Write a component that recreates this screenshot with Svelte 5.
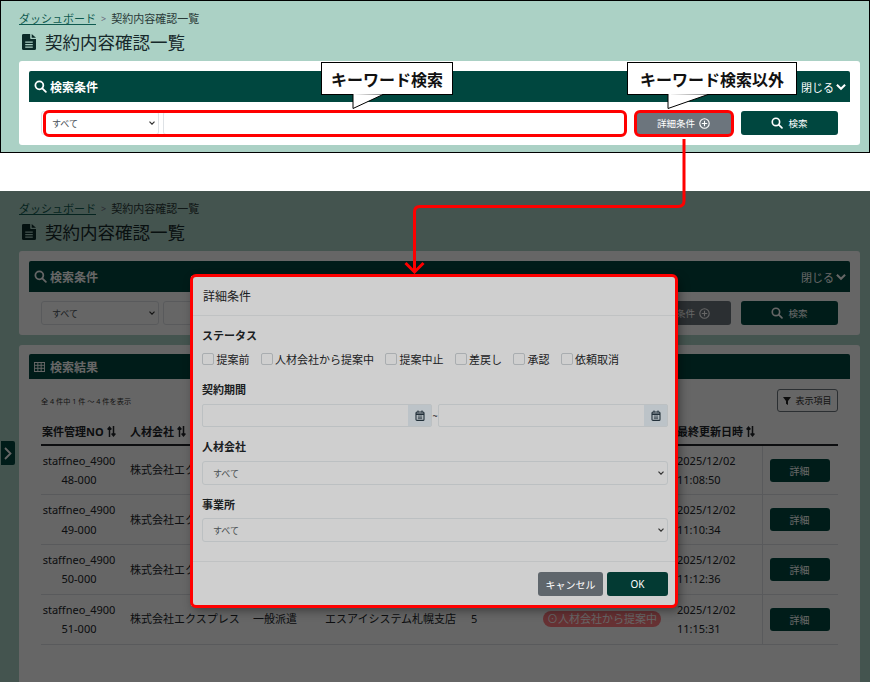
<script>
  const rows = [
    { no: '48-000', date: '11:08:50' },
    { no: '49-000', date: '11:10:34' },
    { no: '50-000', date: '11:12:36' },
    { no: '51-000', date: '11:15:31' }
  ];
  const statuses = ['提案前', '人材会社から提案中', '提案中止', '差戻し', '承認', '依頼取消'];
</script>

{#snippet searchIcon(size)}
  <svg width={size} height={size} viewBox="0 0 16 16" fill="none" stroke="currentColor" stroke-width="2.2">
    <circle cx="6.6" cy="6.6" r="4.9" />
    <path d="M10.2 10.2 14.6 14.6" stroke-linecap="round" />
  </svg>
{/snippet}

{#snippet sortIcon()}
  <svg class="sort" width="9" height="11" viewBox="0 0 9 11" fill="none" stroke="currentColor" stroke-width="1.5">
    <path d="M2.5 11V1.5M.6 3.4 2.5 1.2 4.4 3.4M6.5 0v9.5M4.6 7.6 6.5 9.8 8.4 7.6" />
  </svg>
{/snippet}

{#snippet calendar()}
  <svg width="10" height="11" viewBox="0 0 10 11" fill="none" stroke="#22303a" stroke-width="1.1">
    <rect x="1" y="2" width="8" height="8.4" rx="1" />
    <path d="M1 4.2h8" stroke-width="1.6" />
    <path d="M3 .4v2M7 .4v2" />
    <path d="M2.8 6h4.4M2.8 7.3h4.4M2.8 8.6h4.4" stroke-width=".7" />
  </svg>
{/snippet}

{#snippet selectBox(cls)}
  <div class="select-wrap {cls}">
    <select><option>すべて</option></select>
    <svg class="caret" width="6" height="4" viewBox="0 0 6 4" fill="none" stroke="#333" stroke-width="1.2"><path d="M.5 .7 3 3.2 5.500 .7" /></svg>
  </div>
{/snippet}

{#snippet pageTop()}
  <nav class="crumbs"><span class="crumb-link">ダッシュボード</span><span class="sep">&gt;</span><span>契約内容確認一覧</span></nav>
  <h1 class="title">
    <svg width="14" height="16" viewBox="0 0 13 17" preserveAspectRatio="none" fill="#0c2b29">
      <path d="M1.4 0H7.6V4.6Q7.6 5.4 8.4 5.4H13V15.6Q13 17 11.6 17H1.4Q0 17 0 15.6V1.4Q0 0 1.4 0ZM9 0 13 4H9ZM3 8V9.3H10V8ZM3 10.6V11.9H10V10.6ZM3 13.2V14.5H10V13.2Z" fill-rule="evenodd" />
    </svg>
    <span class="title-text">契約内容確認一覧</span>
  </h1>
  <section class="card search-card">
    <div class="bar search-bar">
      <span class="bar-title">{@render searchIcon(13)} 検索条件</span>
      <span class="bar-close">閉じる
        <svg width="10" height="8" viewBox="0 0 11 8" fill="none" stroke="currentColor" stroke-width="2.2"><path d="M1 1.5 5.5 6 10 1.5" /></svg>
      </span>
    </div>
    <div class="search-row">
      {@render selectBox('kind')}
      <input class="keyword" type="text" />
      <button class="btn grey detail-btn">詳細条件
        <svg width="11" height="11" viewBox="0 0 11 11" fill="none" stroke="currentColor" stroke-width="1.1"><circle cx="5.5" cy="5.5" r="4.7" /><path d="M5.5 2.8v5.4M2.8 5.5h5.4" /></svg>
      </button>
      <button class="btn dark search-btn">{@render searchIcon(12)} 検索</button>
    </div>
  </section>
{/snippet}

<div class="figure">
  <div class="panel top-panel">
    {@render pageTop()}
  </div>

  <div class="panel dim-panel">
    {@render pageTop()}

    <section class="card result-card">
      <div class="bar result-bar">
        <svg width="11" height="10" viewBox="0 0 12 10" preserveAspectRatio="none" fill="none" stroke="currentColor" stroke-width="1"><rect x=".5" y=".5" width="11" height="9" /><path d="M.5 3.3h11M.5 6.3h11M4.2 .5v9M7.8 .5v9" /></svg>
        <span>検索結果</span>
      </div>
      <div class="result-inner">
        <div class="toolbar">
          <span class="count">全 4 件中 1 件 ～ 4 件を表示</span>
          <button class="columns-btn">
            <svg width="8" height="8" viewBox="0 0 8 8" fill="#222"><path d="M0 0H8L5 4V8L3 6.8V4Z" /></svg>
            表示項目
          </button>
        </div>
        <table>
          <colgroup>
            <col style="width:76px" /><col style="width:136px" /><col style="width:72px" /><col style="width:146px" />
            <col style="width:72px" /><col style="width:134px" /><col style="width:85px" /><col style="width:76px" />
          </colgroup>
          <thead>
            <tr>
              <th class="first">案件管理NO {@render sortIcon()}</th>
              <th class="second">人材会社 {@render sortIcon()}</th>
              <th>契約種別</th>
              <th>事業所</th>
              <th>人数</th>
              <th>ステータス</th>
              <th colspan="2">最終更新日時 {@render sortIcon()}</th>
            </tr>
          </thead>
          <tbody>
            {#each rows as row}
              <tr>
                <td class="no">staffneo_4900<br />{row.no}</td>
                <td class="second">株式会社エクスプレス</td>
                <td>一般派遣</td>
                <td>エスアイシステム札幌支店</td>
                <td>5</td>
                <td><span class="badge">⊙人材会社から提案中</span></td>
                <td>2025/12/02<br />{row.date}</td>
                <td class="action"><button class="btn dark row-btn">詳細</button></td>
              </tr>
            {/each}
          </tbody>
        </table>
      </div>
    </section>

    <button class="side-toggle" aria-label="開く">
      <svg width="8" height="13" viewBox="0 0 8 13" fill="none" stroke="#fff" stroke-width="1.8"><path d="M1 1 6.500 6.500 1 12" /></svg>
    </button>

    <div class="backdrop"></div>

    <div class="modal">
      <header class="modal-head">詳細条件</header>
      <div class="modal-body">
        <div class="label">ステータス</div>
        <div class="checks">
          {#each statuses as s}
            <label class="check"><input type="checkbox" /><span>{s}</span></label>
          {/each}
        </div>
        <div class="label period">契約期間</div>
        <div class="dates">
          <div class="date-input"><input type="text" /><span class="addon">{@render calendar()}</span></div>
          <span class="tilde">~</span>
          <div class="date-input"><input type="text" /><span class="addon">{@render calendar()}</span></div>
        </div>
        <div class="label next">人材会社</div>
        {@render selectBox('wide')}
        <div class="label next">事業所</div>
        {@render selectBox('wide last')}
      </div>
      <footer class="modal-foot">
        <button class="btn cancel">キャンセル</button>
        <button class="btn ok">OK</button>
      </footer>
    </div>
  </div>

  <!-- annotations drawn over the two screenshots -->
  <div class="mark mark-keyword"></div>
  <div class="mark mark-detail"></div>
  <div class="mark mark-modal"></div>

  <div class="callout call-keyword">キーワード検索</div>
  <div class="callout call-other">キーワード検索以外</div>

  <svg class="connector" width="870" height="682" viewBox="0 0 870 682" fill="none">
    <path d="M684 139V201Q684 206.500 678 206.500H420Q414.500 206.500 414.500 212V271" stroke="#f00" stroke-width="3" />
    <path d="M405.500 263 414.500 272 423.500 263" stroke="#f00" stroke-width="3" />
    <path d="M353 94V108.500L383 94.500" fill="#fff" stroke="#000" />
    <path d="M668 94V108.500L708 94.500" fill="#fff" stroke="#000" />
  </svg>
</div>

<style>
  :global(body) {
    margin: 0;
    background: #fff;
  }

  * {
    box-sizing: border-box;
  }

  .figure {
    position: relative;
    width: 870px;
    height: 682px;
    overflow: hidden;
    background: #fff;
    font-family: "Noto Sans", "Noto Sans CJK JP", sans-serif;
    font-size: 11px;
    color: #212529;
  }

  button,
  input,
  select {
    font-family: inherit;
  }

  .panel {
    background: #abd1c5;
    padding: 7px 0 0 18px;
  }

  .top-panel {
    height: 153px;
    border: 1px solid #000;
  }

  .dim-panel {
    position: relative;
    height: 491px;
    margin-top: 38px;
    padding-left: 19px;
    overflow: hidden;
  }

  .crumbs {
    display: flex;
    align-items: center;
    gap: 5px;
    height: 20px;
    font-size: 11px;
    color: #2a3a38;
  }

  .crumb-link {
    color: #0f5a50;
    text-decoration: underline;
  }

  .sep {
    color: #667;
    font-size: 9px;
  }

  .title {
    display: flex;
    align-items: center;
    gap: 9px;
    height: 22px;
    margin: 4px 0 7px;
    font-size: 17.5px;
    font-weight: 400;
    color: #16282a;
  }

  .title svg {
    margin: 0 0 2px 3px;
  }

  .title-text {
    margin-bottom: 4px;
  }

  .card {
    width: 841px;
    background: #fff;
    border-radius: 3px;
    padding: 10px;
  }

  .bar {
    display: flex;
    align-items: center;
    background: #00473f;
    color: #fff;
    border-radius: 2px 2px 0 0;
    font-weight: 700;
    font-size: 12px;
  }

  .search-bar {
    justify-content: space-between;
    height: 31px;
    padding: 0 4px 0 5px;
  }

  .bar-title {
    display: flex;
    align-items: center;
    gap: 3px;
  }

  .bar-close {
    display: flex;
    align-items: center;
    gap: 2px;
    font-size: 11px;
    font-weight: 400;
  }

  .search-row {
    display: flex;
    height: 24px;
    margin: 9px 0 0 12px;
  }

  .select-wrap {
    position: relative;
  }

  .select-wrap select {
    appearance: none;
    display: block;
    width: 100%;
    height: 100%;
    border-radius: 3px;
    font-size: 9px;
    padding: 0 0 0 10px;
  }

  .caret {
    position: absolute;
    right: 4px;
    top: 10px;
  }

  .kind {
    width: 118px;
    height: 24px;
  }

  .kind select {
    color: #495057;
    background: #fff;
    border: 1px solid #dee2e6;
  }

  .keyword {
    width: 463px;
    height: 24px;
    margin-left: 4px;
    background: #fff;
    border: 1px solid #dee2e6;
    border-radius: 3px;
  }

  .btn {
    display: inline-flex;
    align-items: center;
    justify-content: center;
    gap: 4px;
    border: 0;
    border-radius: 3px;
    color: #fff;
    font-size: 9.5px;
    padding: 0;
  }

  .grey {
    background: #6c757d;
  }

  .dark {
    background: #00473f;
  }

  .detail-btn {
    width: 95px;
    height: 24px;
    margin-left: 10px;
  }

  .search-btn {
    width: 97px;
    height: 24px;
    margin-left: 10px;
    gap: 5px;
  }

  .result-card {
    height: 400px;
    margin-top: 10px;
    padding: 9px 10px;
  }

  .result-bar {
    gap: 5px;
    height: 25px;
    padding: 0 5px;
  }

  .result-bar span {
    font-weight: 700;
  }

  .result-inner {
    padding: 10px 12px 0;
  }

  .toolbar {
    display: flex;
    align-items: center;
    justify-content: space-between;
    height: 23px;
  }

  .count {
    font-size: 7.2px;
    color: #333;
  }

  .columns-btn {
    display: inline-flex;
    align-items: center;
    justify-content: center;
    gap: 4px;
    width: 61px;
    height: 23px;
    background: transparent;
    border: 1px solid #6c757d;
    border-radius: 3px;
    color: #333;
    font-size: 9px;
    padding: 0;
  }

  table {
    width: 797px;
    table-layout: fixed;
    border-collapse: collapse;
  }

  th {
    height: 33px;
    padding: 6px 0 0;
    text-align: left;
    font-size: 11px;
    font-weight: 700;
    border-bottom: 2px solid #212529;
    white-space: nowrap;
  }

  th.first {
    padding-left: 1px;
  }

  .second {
    padding-left: 13px;
  }

  .sort {
    vertical-align: -1px;
  }

  td {
    height: 49.75px;
    padding: 0;
    line-height: 19.5px;
    border-bottom: 1px solid #dee2e6;
    white-space: nowrap;
    overflow: hidden;
  }

  td.no {
    text-align: center;
  }

  td.action {
    padding-left: 7px;
    border-left: 1px solid #dee2e6;
  }

  .row-btn {
    width: 60px;
    height: 23px;
    font-size: 10px;
    vertical-align: middle;
  }

  .badge {
    display: inline-block;
    padding: 0 4px;
    height: 16px;
    line-height: 15px;
    background: #ff7a80;
    color: #fff;
    border-radius: 8px;
    font-size: 11px;
  }

  .side-toggle {
    position: absolute;
    left: 1px;
    top: 250px;
    display: flex;
    align-items: center;
    justify-content: center;
    width: 14px;
    height: 24px;
    padding: 0;
    border: 0;
    border-radius: 0 2px 2px 0;
    background: #00473f;
  }

  .backdrop {
    position: absolute;
    inset: 0;
    background: rgba(0, 0, 0, 0.6);
  }

  .modal {
    position: absolute;
    left: 191px;
    top: 85px;
    width: 485px;
    height: 330px;
    background: #cfcfcf;
    box-shadow: 3px 4px 10px rgba(0, 0, 0, 0.45);
    color: #1a2022;
  }

  .modal-head {
    display: flex;
    align-items: center;
    height: 40px;
    padding-left: 12px;
    font-size: 12px;
    border-bottom: 1px solid #c0c2c3;
  }

  .modal-body {
    padding: 12px 8px 19px 11px;
    border-bottom: 1px solid #c0c2c3;
  }

  .label {
    height: 16px;
    line-height: 16px;
    font-size: 11px;
    font-weight: 700;
  }

  .period {
    margin-top: 15px;
  }

  .next {
    margin-top: 12px;
  }

  .checks {
    display: flex;
    gap: 11px;
    height: 16px;
    margin-top: 7px;
  }

  .check {
    display: flex;
    align-items: center;
    gap: 2.500px;
  }

  .check input {
    appearance: none;
    width: 12px;
    height: 12px;
    margin: 0 0 1px;
    background: #cfcfcf;
    border: 1px solid #a9adb0;
    border-radius: 2px;
  }

  .dates {
    display: flex;
    align-items: center;
    height: 23px;
    margin-top: 6px;
  }

  .tilde {
    width: 6px;
    font-size: 9px;
    text-align: center;
  }

  .date-input {
    display: flex;
    width: 230px;
    height: 23px;
    border: 1px solid #bcc0c2;
    border-radius: 2px;
  }

  .date-input input {
    flex: 1;
    min-width: 0;
    border: 0;
    background: transparent;
  }

  .addon {
    display: flex;
    align-items: center;
    justify-content: center;
    width: 23px;
    background: #bcc3c8;
  }

  .wide {
    width: 466px;
    height: 24px;
    margin-top: 6px;
  }

  .wide select {
    background: #cfcfcf;
    border: 1px solid #bcc0c2;
    color: #4a4f52;
  }

  .wide.last {
    margin-top: 5px;
  }

  .modal-foot {
    display: flex;
    justify-content: flex-end;
    gap: 4px;
    padding: 10px 8px 0 0;
  }

  .cancel {
    width: 65px;
    height: 24px;
    background: #5f666c;
    font-size: 10px;
  }

  .ok {
    width: 61px;
    height: 24px;
    background: #033a33;
    font-size: 10px;
  }

  .mark {
    position: absolute;
    border: 3px solid #f00;
    border-radius: 6px;
    pointer-events: none;
  }

  .mark-keyword {
    left: 43px;
    top: 110px;
    width: 584px;
    height: 27px;
  }

  .mark-detail {
    left: 634px;
    top: 110px;
    width: 100px;
    height: 27px;
  }

  .mark-modal {
    left: 190px;
    top: 274px;
    width: 488px;
    height: 334px;
  }

  .connector {
    position: absolute;
    left: 0;
    top: 0;
    pointer-events: none;
  }

  .callout {
    position: absolute;
    top: 62px;
    height: 33px;
    display: flex;
    align-items: center;
    justify-content: center;
    background: #fff;
    border: 1px solid #000;
    font-size: 16px;
    font-weight: 700;
    color: #111;
  }

  .call-keyword {
    left: 321px;
    width: 132px;
  }

  .call-other {
    left: 627px;
    width: 170px;
  }
</style>
